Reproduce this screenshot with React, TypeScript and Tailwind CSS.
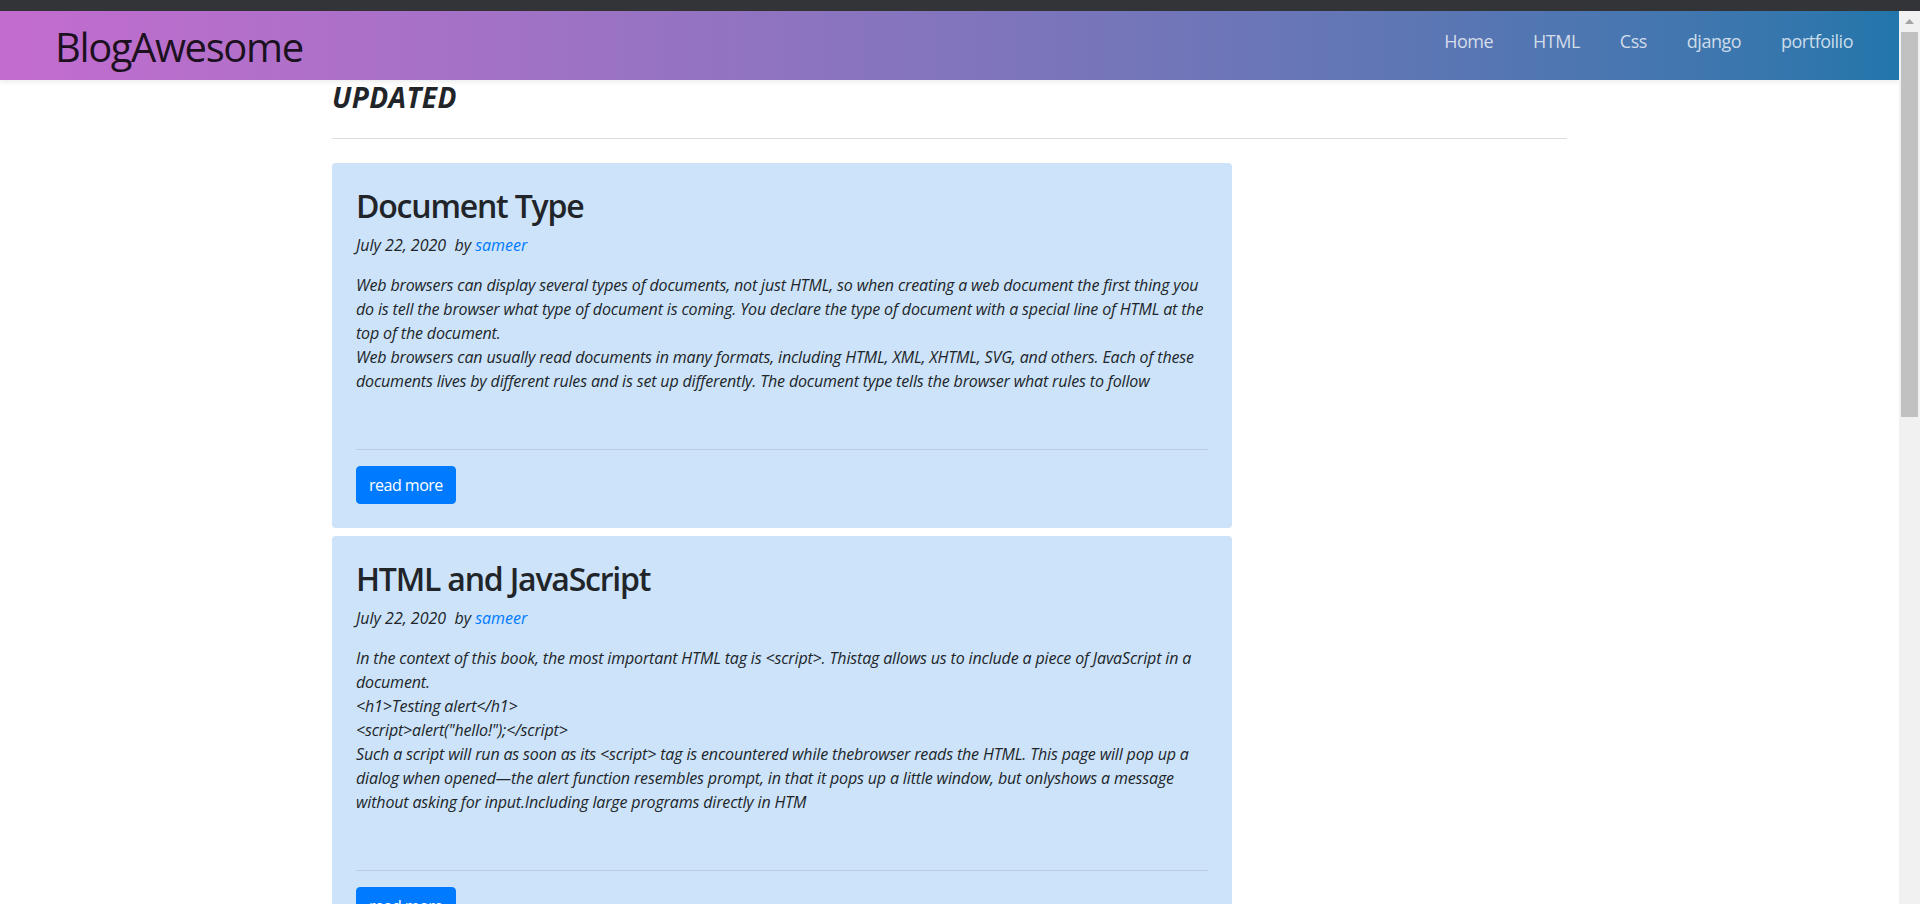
type Post = {
  id: number;
  title: string;
  date: string;
  author: string;
  lines: string[];
};

const posts: Post[] = [
  {
    id: 1,
    title: "Document Type",
    date: "July 22, 2020",
    author: "sameer",
    lines: [
      "Web browsers can display several types of documents, not just HTML, so when creating a web document the first thing you",
      "do is tell the browser what type of document is coming. You declare the type of document with a special line of HTML at the",
      "top of the document.",
      "Web browsers can usually read documents in many formats, including HTML, XML, XHTML, SVG, and others. Each of these",
      "documents lives by different rules and is set up differently. The document type tells the browser what rules to follow",
    ],
  },
  {
    id: 2,
    title: "HTML and JavaScript",
    date: "July 22, 2020",
    author: "sameer",
    lines: [
      "In the context of this book, the most important HTML tag is <script>. Thistag allows us to include a piece of JavaScript in a",
      "document.",
      "<h1>Testing alert</h1>",
      '<script>alert("hello!");</script>',
      "Such a script will run as soon as its <script> tag is encountered while thebrowser reads the HTML. This page will pop up a",
      "dialog when opened\u2014the alert function resembles prompt, in that it pops up a little window, but onlyshows a message",
      "without asking for input.Including large programs directly in HTM",
    ],
  },
];

const links = ["Home", "HTML", "Css", "django", "portfoilio"];

function Navbar() {
  return (
    <nav className="relative z-10 flex h-[69px] items-start justify-between bg-linear-to-r from-[#c36ccf] to-[#2176ab] pl-[55px] pr-[26px] shadow-[0_2px_5px_rgba(0,0,0,0.08)]">
      <a href="#" className="mt-[16px] text-[40px] leading-none tracking-[-1.4px] text-black/85">
        BlogAwesome
      </a>
      <ul className="mt-[18px] flex">
        {links.map((l) => (
          <li key={l}>
            <a href="#" className="block px-5 text-[18px] leading-6 tracking-[-0.5px] text-white/75">
              {l}
            </a>
          </li>
        ))}
      </ul>
    </nav>
  );
}

function PostCard({ post }: { post: Post }) {
  return (
    <div className="mb-2 w-[900px] rounded-[4px] bg-[#cce3f9] p-6">
      <h2 className="mb-2 text-[32px] font-semibold leading-[1.2] tracking-[-1.2px]">{post.title}</h2>
      <p className="mb-4 text-[16px] italic leading-6">
        {post.date}&nbsp; by <a href="#" className="text-[#007bff]">{post.author}</a>
      </p>
      <div className="pb-10 text-[16px] italic leading-6 tracking-[-0.15px]">
        {post.lines.map((line, i) => (
          <span key={i} className="block whitespace-nowrap">
            {line}
          </span>
        ))}
      </div>
      <hr className="my-4 border-t border-[#b8cce2]" />
      <button className="rounded-[4px] border border-[#007bff] bg-[#007bff] px-3 py-1.5 text-[16px] leading-6 tracking-[-0.5px] text-white">
        read more
      </button>
    </div>
  );
}

function Scrollbar() {
  return (
    <div className="flex w-[21px] flex-col bg-[#f1f1f1]">
      <div className="flex h-[21px] items-center justify-center">
        <svg width="9" height="5" viewBox="0 0 9 5">
          <path d="M0 5 L4.5 0 L9 5 Z" fill="#a3a3a3" />
        </svg>
      </div>
      <div className="ml-[2px] h-[385px] w-[17px] bg-[#c1c1c1]" />
    </div>
  );
}

export default function App() {
  return (
    <div className="h-[904px] overflow-hidden bg-white font-['Open_Sans',sans-serif] text-[#212529]">
      <div className="h-[11px] bg-[#333438]" />
      <div className="flex h-[893px]">
        <div className="flex-1 overflow-hidden">
          <Navbar />
          <main className="mx-auto w-[1235px]">
            <h3 className="mt-px text-[28px] font-bold italic leading-[1.2] tracking-[0.4px]">UPDATED</h3>
            <hr className="mt-[23px] mb-6 border-t border-[#dedede]" />
            {posts.map((p) => (
              <PostCard key={p.id} post={p} />
            ))}
          </main>
        </div>
        <Scrollbar />
      </div>
    </div>
  );
}
